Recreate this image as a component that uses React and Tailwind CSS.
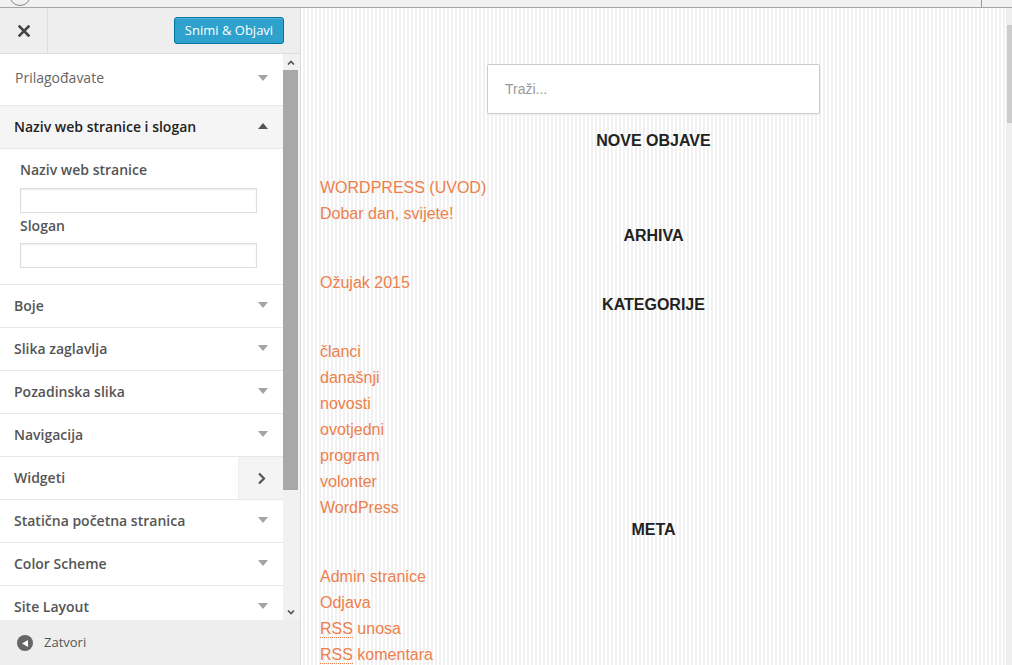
import React from "react";

const Down = ({ color = "#a0a5aa" }) => (
  <svg width="10" height="6" viewBox="0 0 10 6">
    <path d="M0 0h10L5 6z" fill={color} />
  </svg>
);

const Up = ({ color = "#555" }) => (
  <svg width="10" height="6" viewBox="0 0 10 6">
    <path d="M0 6h10L5 0z" fill={color} />
  </svg>
);

const Row = ({ label }) => (
  <div className="flex h-[43px] items-center justify-between border-b border-[#e8e8e8] pb-[2px] pl-[14px] pr-[15px]">
    <span className="text-[14px] font-semibold text-[#555]">{label}</span>
    <Down />
  </div>
);

const Link = ({ children }) => (
  <li className="text-[16px] leading-[26px] text-[#ec7f4c]">{children}</li>
);

const Links = ({ children }) => <ul className="-mb-[1px] pt-[1px]">{children}</ul>;

const Heading = ({ children }) => (
  <h2 className="mb-[23px] h-5 text-center text-[16px] font-bold leading-5 text-[#222]">{children}</h2>
);

const App = () => {
  return (
    <div className="flex h-[665px] w-[1012px] flex-col overflow-hidden bg-white">
      {/* browser strip */}
      <div className="flex h-[8px] shrink-0 overflow-hidden border-b border-[#a5a5a5] bg-[#f1f1f1]">
        <div className="-mt-[16px] ml-[9px] h-[22px] w-[22px] shrink-0 rounded-full border border-[#888]"></div>
        <div className="ml-[950px] h-full w-px bg-[#999]"></div>
      </div>

      <div className="flex min-h-0 flex-1">
        {/* sidebar */}
        <div className="flex w-[300px] shrink-0 flex-col bg-[#eee] font-['Open_Sans',sans-serif]">
          <div className="flex h-[46px] shrink-0 items-center justify-between border-b border-[#ddd]">
            <div className="flex h-full w-[48px] items-center justify-center border-r border-[#ddd]">
              <svg width="12" height="12" viewBox="0 0 12 12">
                <path d="M1.5 1.5l9 9M10.5 1.5l-9 9" stroke="#444" strokeWidth="2.6" strokeLinecap="square" />
              </svg>
            </div>
            <button className="mr-[16px] h-[27px] w-[110px] rounded-[3px] border border-[#0074a2] bg-[#2ea2cc] text-[13px] text-white shadow-[inset_0_1px_0_rgba(120,200,230,0.5)]">
              Snimi &amp; Objavi
            </button>
          </div>

          <div className="flex min-h-0 flex-1">
            <div className="w-[283px] shrink-0 overflow-hidden bg-white">
              <div className="flex h-[52px] items-center justify-between border-b border-[#e8e8e8] pb-[4px] pl-[15px] pr-[15px]">
                <span className="text-[14px] text-[#666]">Prilagođavate</span>
                <Down />
              </div>
              <div className="flex h-[43px] items-center justify-between border-b border-[#e8e8e8] bg-[#f5f5f5] pb-[2px] pl-[14px] pr-[15px]">
                <span className="text-[14px] font-semibold text-[#222]">Naziv web stranice i slogan</span>
                <Up />
              </div>
              <div className="flex h-[136px] flex-col border-b border-[#e8e8e8] px-[20px] pt-[12px]">
                <span className="text-[14px] font-semibold leading-[18px] text-[#555]">Naziv web stranice</span>
                <input className="mt-[9px] h-[25px] w-[237px] border border-[#ddd] bg-white shadow-[inset_0_1px_2px_rgba(0,0,0,0.07)] outline-none" />
                <span className="mt-[4px] text-[14px] font-semibold leading-[18px] text-[#555]">Slogan</span>
                <input className="mt-[8px] h-[25px] w-[237px] border border-[#ddd] bg-white shadow-[inset_0_1px_2px_rgba(0,0,0,0.07)] outline-none" />
              </div>
              <Row label="Boje" />
              <Row label="Slika zaglavlja" />
              <Row label="Pozadinska slika" />
              <Row label="Navigacija" />
              <div className="flex h-[43px] items-center justify-between border-b border-[#e8e8e8] pl-[14px]">
                <span className="pb-[2px] text-[14px] font-semibold text-[#555]">Widgeti</span>
                <div className="flex h-full w-[45px] items-center justify-center border-l border-[#eee] bg-[#f4f4f4]">
                  <svg width="9" height="13" viewBox="0 0 9 13">
                    <path d="M2 1.5l5 5-5 5" stroke="#555" strokeWidth="2.2" fill="none" />
                  </svg>
                </div>
              </div>
              <Row label="Statična početna stranica" />
              <Row label="Color Scheme" />
              <Row label="Site Layout" />
            </div>
            {/* sidebar scrollbar */}
            <div className="flex w-[17px] shrink-0 flex-col bg-[#f1f1f1]">
              <div className="flex h-[16px] w-[15px] items-center justify-center">
                <svg width="8" height="5" viewBox="0 0 8 5">
                  <path d="M1 4.5l3-3 3 3" stroke="#505050" strokeWidth="1.6" fill="none" />
                </svg>
              </div>
              <div className="h-[420px] w-[15px] bg-[#a8a8a8]"></div>
              <div className="flex-1"></div>
              <div className="flex h-[16px] w-[15px] items-center justify-center">
                <svg width="8" height="5" viewBox="0 0 8 5">
                  <path d="M1 0.5l3 3 3-3" stroke="#505050" strokeWidth="1.6" fill="none" />
                </svg>
              </div>
            </div>
          </div>

          <div className="flex h-[45px] shrink-0 items-center gap-[11px] pl-[17px] pt-[1px]">
            <div className="flex h-[16px] w-[16px] items-center justify-center rounded-full bg-[#666]">
              <svg width="6" height="7" viewBox="0 0 6 7" className="-ml-[1px]">
                <path d="M6 0v7L0 3.5z" fill="#fff" />
              </svg>
            </div>
            <span className="text-[13px] text-[#555]">Zatvori</span>
          </div>
        </div>

        {/* preview */}
        <div className="flex min-w-0 flex-1 border-l border-[#ddd] bg-[image:repeating-linear-gradient(90deg,#fff_0px,#fff_2px,#f1f1f1_2px,#f1f1f1_4px)] font-['Liberation_Sans',Arial,sans-serif]">
          <div className="flex-1 px-[19px] pt-[56px]">
            <div className="flex justify-center">
              <div className="flex h-[50px] w-[333px] items-center rounded-[2px] border border-[#ccc] bg-white pl-[17px] shadow-[0_1px_2px_rgba(0,0,0,0.05)]">
                <span className="text-[14px] text-[#999]">Traži...</span>
              </div>
            </div>
            <div className="mt-[17px]">
              <Heading>NOVE OBJAVE</Heading>
              <Links>
                <Link>WORDPRESS (UVOD)</Link>
                <Link>Dobar dan, svijete!</Link>
              </Links>
              <Heading>ARHIVA</Heading>
              <Links>
                <Link>Ožujak 2015</Link>
              </Links>
              <Heading>KATEGORIJE</Heading>
              <Links>
                <Link>članci</Link>
                <Link>današnji</Link>
                <Link>novosti</Link>
                <Link>ovotjedni</Link>
                <Link>program</Link>
                <Link>volonter</Link>
                <Link>WordPress</Link>
              </Links>
              <Heading>META</Heading>
              <Links>
                <Link>Admin stranice</Link>
                <Link>Odjava</Link>
                <Link>
                  <span className="border-b border-dotted border-[#ec7f4c]">RSS</span> unosa
                </Link>
                <Link>
                  <span className="border-b border-dotted border-[#ec7f4c]">RSS</span> komentara
                </Link>
              </Links>
            </div>
          </div>
          {/* preview scrollbar */}
          <div className="w-[6px] shrink-0 bg-[#efefef]">
            <div className="ml-[1px] mt-[17px] h-[98px] bg-[#cdcdcd]"></div>
          </div>
        </div>
      </div>
    </div>
  );
};

export default App;
